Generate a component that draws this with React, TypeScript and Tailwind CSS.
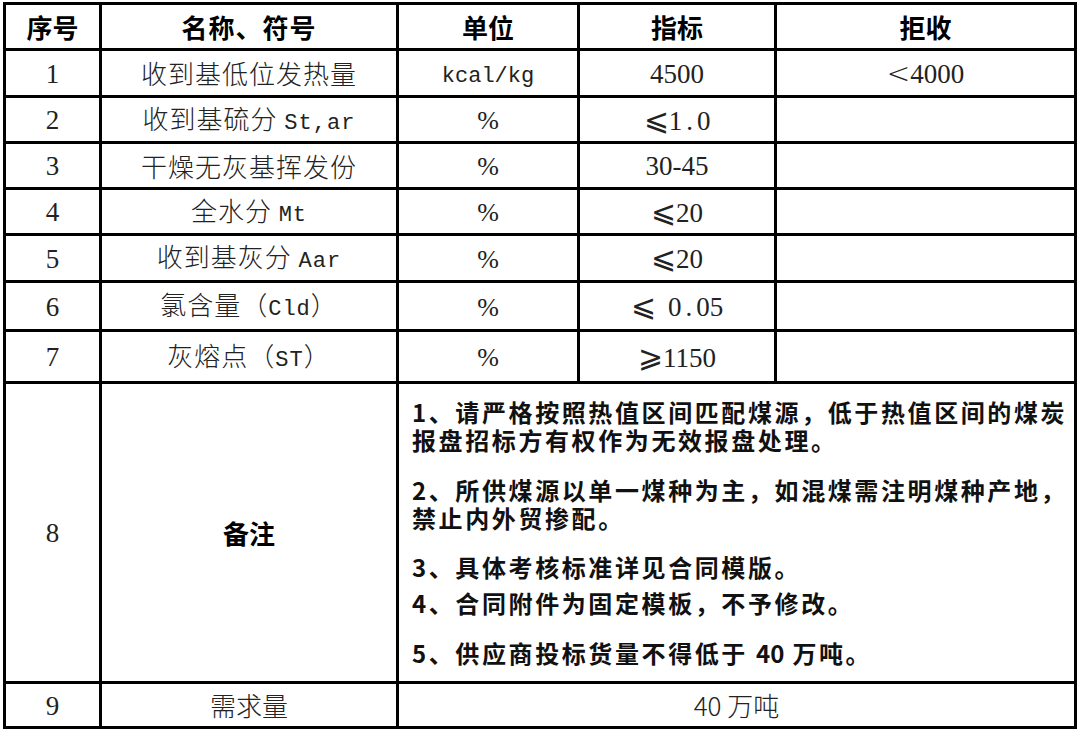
const cjk = "font-['Noto_Sans_CJK_SC',sans-serif]";

type Row = { no: string; name: React.ReactNode; unit: React.ReactNode; index: React.ReactNode; reject?: React.ReactNode };

const Mono = ({ children }: { children: React.ReactNode }) => (
  <span className="font-['Liberation_Mono',monospace] text-[22px]">{children}</span>
);

const Num = ({ children }: { children: React.ReactNode }) => (
  <span className="font-['Liberation_Serif',serif] text-[27px]">{children}</span>
);

const Pct = () => <span className="font-['Liberation_Serif',serif] text-[26px]">%</span>;

const Le = () => <span className="font-['DejaVu_Sans',sans-serif] text-[30px] font-extralight">⩽</span>;
const Ge = () => <span className="font-['DejaVu_Sans',sans-serif] text-[30px] font-extralight">⩾</span>;

const rows: Row[] = [
  { no: "1", name: "收到基低位发热量", unit: <Mono>kcal/kg</Mono>, index: <Num>4500</Num>, reject: <><span className="font-['DejaVu_Sans',sans-serif] text-[28px] font-extralight">&lt;</span><Num>4000</Num></> },
  { no: "2", name: <>收到基硫分 <Mono>St,ar</Mono></>, unit: <Pct />, index: <><Le /><Num><span className="tracking-[4px]">1.</span>0</Num></> },
  { no: "3", name: "干燥无灰基挥发份", unit: <Pct />, index: <Num>30-45</Num> },
  { no: "4", name: <>全水分 <Mono>Mt</Mono></>, unit: <Pct />, index: <><Le /><Num>20</Num></> },
  { no: "5", name: <>收到基灰分 <Mono>Aar</Mono></>, unit: <Pct />, index: <><Le /><Num>20</Num></> },
  { no: "6", name: <>氯含量（<Mono>Cld</Mono>）</>, unit: <Pct />, index: <><Le /><span className="inline-block w-[12px]" /><Num><span className="tracking-[4px]">0.</span>05</Num></> },
  { no: "7", name: <>灰熔点（<Mono>ST</Mono>）</>, unit: <Pct />, index: <><Ge /><Num>1150</Num></> },
];

const cell = "border-r-[3px] border-b-[3px] border-black flex items-center justify-center";
const body = `${cell} ${cjk} text-[26px] font-light text-[#222] leading-none`;
const head = `${cell} ${cjk} text-[26px] font-bold text-black leading-none`;

const Body = ({ children, className = "" }: { children?: React.ReactNode; className?: string }) => (
  <div className={`${body} ${className}`}>
    <span className="whitespace-pre">{children}</span>
  </div>
);

const Notes = () => (
  <div className={`border-r-[3px] border-b-[3px] border-black col-span-3 flex flex-col pl-[13px] pt-[14px] ${cjk} text-[24px] font-semibold text-[#111] leading-[28px] tracking-[2.6px] whitespace-nowrap`}>
    <div>
      <div>1、请严格按照热值区间匹配煤源，低于热值区间的煤炭</div>
      <div>报盘招标方有权作为无效报盘处理。</div>
    </div>
    <div className="mt-[22px]">
      <div>2、所供煤源以单一煤种为主，如混煤需注明煤种产地，</div>
      <div>禁止内外贸掺配。</div>
    </div>
    <div className="mt-[21px]">3、具体考核标准详见合同模版。</div>
    <div className="mt-[8px]">4、合同附件为固定模板，不予修改。</div>
    <div className="mt-[22px]">
      5、供应商投标货量不得低于 <span className="tracking-normal">40</span> 万吨。
    </div>
  </div>
);

export default function App() {
  return (
    <div className="w-[1080px] h-[733px] bg-white pt-[2px] pl-[3px] overflow-hidden">
      <div className="w-[1074px] grid grid-cols-[96px_297px_181px_197px_300px] grid-rows-[46px_47px_46px_46px_46px_47px_49px_52px_300px_45px] border-l-[3px] border-t-[3px] border-black">
        <div className={head}>序号</div>
        <div className={`${head} tracking-[1px]`}>名称、符号</div>
        <div className={head}>单位</div>
        <div className={head}>指标</div>
        <div className={head}>拒收</div>

        {rows.map((r) => (
          <div key={r.no} className="contents">
            <Body><Num>{r.no}</Num></Body>
            <Body className="tracking-[1px]">{r.name}</Body>
            <Body>{r.unit}</Body>
            <Body>{r.index}</Body>
            <Body>{r.reject}</Body>
          </div>
        ))}

        <Body><Num>8</Num></Body>
        <div className={head}>备注</div>
        <Notes />

        <Body><Num>9</Num></Body>
        <Body>需求量</Body>
        <Body className="col-span-3">40 万吨</Body>
      </div>
    </div>
  );
}
